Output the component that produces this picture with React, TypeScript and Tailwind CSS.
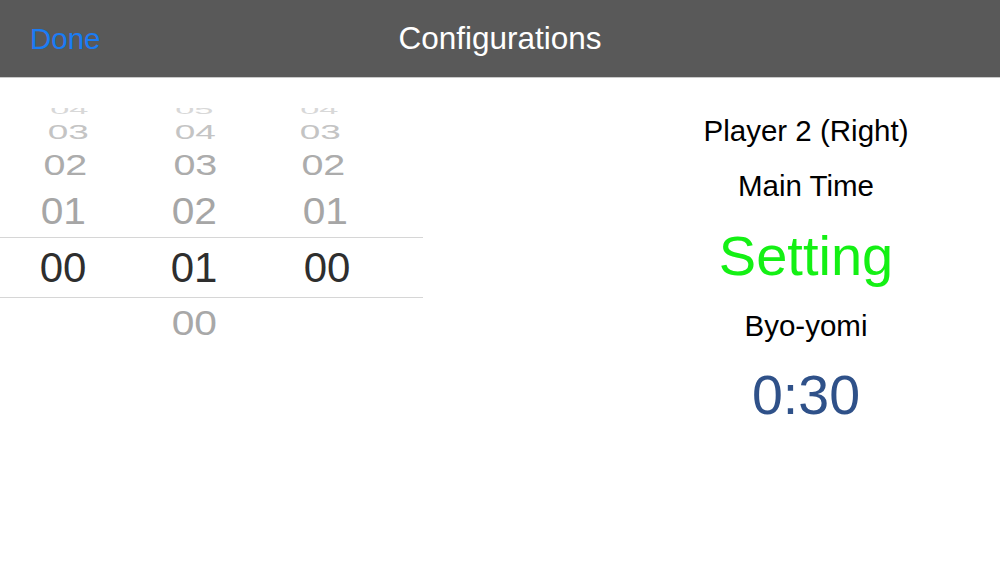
import React from 'react';

const font = { fontFamily: '"Liberation Sans", Arial, sans-serif' };

// rows of the wheel, top to bottom; cells hold text + horizontal perspective shift
const upperRows = [
  {
    h: 'h-[12px]',
    scale: 'scale-y-[0.3] scale-x-[0.82]',
    color: 'text-[#d8d8d8]',
    cells: [
      { t: '04', dx: 'translate-x-[6px] -translate-y-[4px]' },
      { t: '05', dx: '-translate-y-[4px]' },
      { t: '04', dx: '-translate-x-[8px] -translate-y-[4px]' },
    ],
  },
  {
    h: 'h-[23px]',
    scale: 'scale-y-[0.47] scale-x-[0.88]',
    color: 'text-[#c4c4c4]',
    cells: [
      { t: '03', dx: 'translate-x-[5px]' },
      { t: '04', dx: 'translate-x-[1px]' },
      { t: '03', dx: '-translate-x-[7px]' },
    ],
  },
  {
    h: 'h-[44px]',
    scale: 'scale-y-[0.7] scale-x-[0.94]',
    color: 'text-[#acacac]',
    cells: [
      { t: '02', dx: 'translate-x-[2px]' },
      { t: '03', dx: 'translate-x-[1px]' },
      { t: '02', dx: '-translate-x-[4px]' },
    ],
  },
  {
    h: 'h-[50px]',
    scale: 'scale-y-[0.87] scale-x-[0.97]',
    color: 'text-[#a6a6a6]',
    cells: [
      { t: '01', dx: '' },
      { t: '02', dx: '' },
      { t: '01', dx: '-translate-x-[2px]' },
    ],
  },
];

const colWidths = ['w-[126px]', 'w-[136px]', 'w-[130px]'];

function Cell({ w, children, className }: { w: string; children: React.ReactNode; className: string }) {
  return (
    <div className={`${w} flex items-center justify-center`}>
      <span className={`inline-block text-[42px] leading-none ${className}`}>{children}</span>
    </div>
  );
}

export default function App() {
  return (
    <div className="w-[1000px] h-[563px] bg-white overflow-hidden" style={font}>
      <div className="h-[78px] bg-[#595959] border-b border-[#c9c9c9] grid grid-cols-[1fr_auto_1fr] items-center">
        <div className="pl-[30px] text-[29.5px] text-[#1a7cf5] leading-none">Done</div>
        <div className="text-[31.5px] text-white leading-none">Configurations</div>
        <div />
      </div>

      <div className="flex">
        <div className="w-[612px] pt-[30px]">
          <div className="w-[423px] flex flex-col">
            {upperRows.map((row, i) => (
              <div key={i} className={`${row.h} flex overflow-hidden`}>
                {row.cells.map((c, j) => (
                  <Cell key={j} w={colWidths[j]} className={`${row.scale} ${row.color} ${c.dx}`}>
                    {c.t}
                  </Cell>
                ))}
              </div>
            ))}
            <div className="h-[61px] flex border-y border-[#d6d6d6]">
              <Cell w={colWidths[0]} className="text-[#2e2e2e]">00</Cell>
              <Cell w={colWidths[1]} className="text-[#2e2e2e]">01</Cell>
              <Cell w={colWidths[2]} className="text-[#2e2e2e]">00</Cell>
            </div>
            <div className="h-[50px] flex">
              <Cell w={colWidths[0]} className="">{''}</Cell>
              <Cell w={colWidths[1]} className="scale-y-[0.83] scale-x-[0.97] text-[#a8a8a8]">00</Cell>
              <Cell w={colWidths[2]} className="">{''}</Cell>
            </div>
          </div>
        </div>

        <div className="flex-1 flex flex-col items-center pt-[33px] text-black">
          <div className="h-[40px] flex items-center text-[29.5px]">Player 2 (Right)</div>
          <div className="h-[40px] mt-[15px] flex items-center text-[29.5px]">Main Time</div>
          <div className="h-[64px] mt-[18px] flex items-center text-[56px] text-[#14f014]">Setting</div>
          <div className="h-[40px] mt-[18px] flex items-center text-[29.5px]">Byo-yomi</div>
          <div className="h-[64px] mt-[18px] flex items-center text-[55.5px] text-[#2f5189]">0:30</div>
        </div>
      </div>
    </div>
  );
}
